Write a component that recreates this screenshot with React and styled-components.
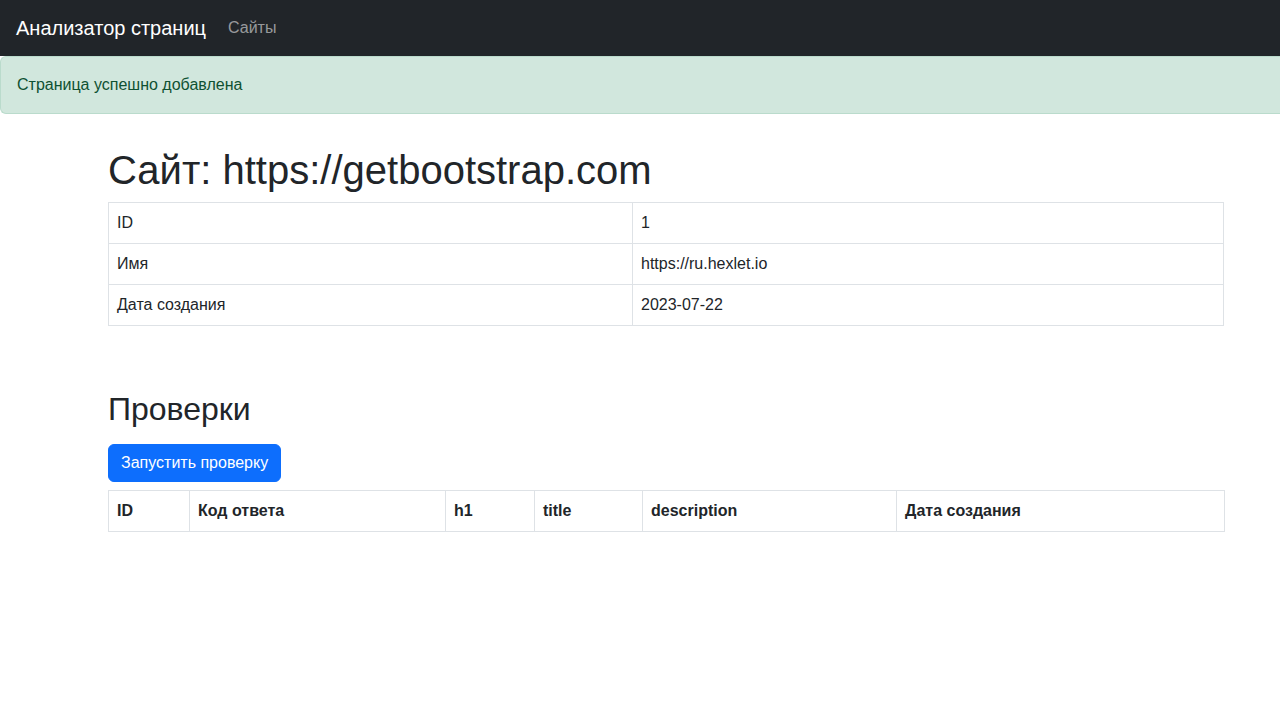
import React from "react";
import styled, { createGlobalStyle } from "styled-components";

const GlobalStyle = createGlobalStyle`
    *, *::before, *::after{ box-sizing:border-box; }
    html, body{ margin:0; padding:0; overflow-x:hidden; }
    body{
        font-family:"Liberation Sans", Arial, sans-serif;
        font-size:16px;
        line-height:1.5;
        color:#212529;
        background:#fff;
    }
`

const Navbar = styled.nav`
    display:flex;
    align-items:center;
    height:56px;
    padding:0 16px;
    background:#212529;
`

const Brand = styled.a`
    font-size:20px;
    line-height:30px;
    color:#fff;
    text-decoration:none;
    margin-right:14px;
`

const NavLink = styled.a`
    padding:8px;
    color:rgba(255,255,255,.55);
    text-decoration:none;
`

const Alert = styled.div`
    padding:16px;
    background:#d1e7dd;
    color:#0f5132;
    border:1px solid #badbcc;
    border-right:none;
    border-radius:6px 0 0 6px;
`

const Main = styled.main`
    padding:32px 56px 0 108px;
`

const Title = styled.h1`
    margin:0 0 8px;
    font-size:40px;
    font-weight:500;
    line-height:1.2;
`

const SubTitle = styled.h2`
    margin:64px 0 8px;
    font-size:32px;
    font-weight:500;
    line-height:1.2;
`

const Table = styled.table`
    width:100%;
    border-collapse:collapse;
    margin-bottom:16px;
    table-layout:fixed;

    td, th{
        border:1px solid #dee2e6;
        padding:8px;
        text-align:left;
        vertical-align:top;
    }
    th{ font-weight:700; }
`

const Button = styled.button`
    display:block;
    margin:16px 0 8px;
    padding:6px 12px;
    font-family:inherit;
    font-size:16px;
    line-height:24px;
    color:#fff;
    background:#0d6efd;
    border:1px solid #0d6efd;
    border-radius:6px;
    cursor:pointer;
`

const checkColumns = [
    ["ID", 81],
    ["Код ответа", 256],
    ["h1", 89],
    ["title", 108],
    ["description", 254],
    ["Дата создания", 328],
];

function App(){
    return(
        <>
            <GlobalStyle />
            <Navbar>
                <Brand href="#">Анализатор страниц</Brand>
                <NavLink href="#">Сайты</NavLink>
            </Navbar>
            <Alert>Страница успешно добавлена</Alert>
            <Main>
                <Title>Сайт: https://getbootstrap.com</Title>
                <Table>
                    <colgroup>
                        <col style={{ width: 524 }} />
                        <col />
                    </colgroup>
                    <tbody>
                        <tr><td>ID</td><td>1</td></tr>
                        <tr><td>Имя</td><td>https://ru.hexlet.io</td></tr>
                        <tr><td>Дата создания</td><td>2023-07-22</td></tr>
                    </tbody>
                </Table>

                <SubTitle>Проверки</SubTitle>
                <form onSubmit={e => e.preventDefault()}>
                    <Button type="submit">Запустить проверку</Button>
                </form>
                <Table>
                    <colgroup>
                        {checkColumns.map(([name, w]) => <col key={name} style={{ width: w }} />)}
                    </colgroup>
                    <thead>
                        <tr>
                            {checkColumns.map(([name]) => <th key={name}>{name}</th>)}
                        </tr>
                    </thead>
                </Table>
            </Main>
        </>
    )
}

export default App;
